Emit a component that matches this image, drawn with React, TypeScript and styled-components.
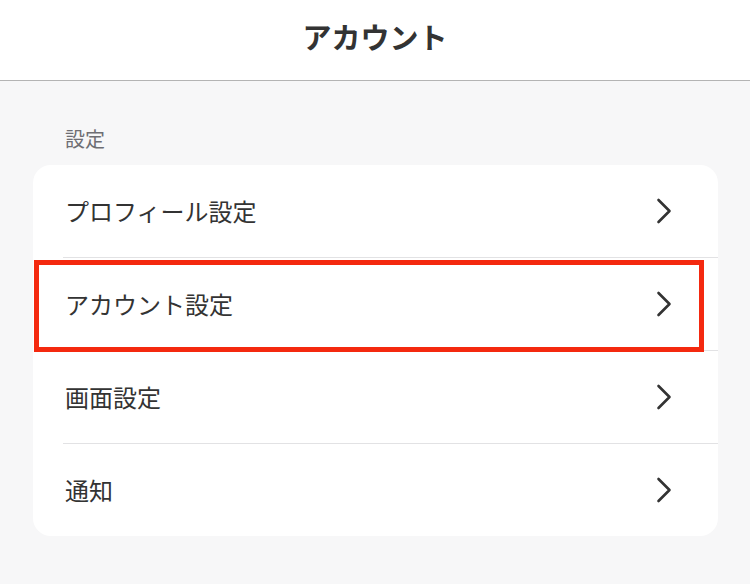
import React from 'react'
import styled, { createGlobalStyle } from 'styled-components'

type RowType = {
    label: string,
    highlighted?: boolean
}

const GlobalStyle = createGlobalStyle`
    html, body {
        margin: 0;
        padding: 0;
        background: #F7F7F8;
        font-family: "Noto Sans CJK JP", "Noto Sans", sans-serif;
        color: #333333;
    }
`

const Page = styled.div`
    width: 750px;
    min-height: 584px;
    background: #F7F7F8;
`

const Header = styled.header`
    height: 80px;
    background: #FFFFFF;
    border-bottom: 1px solid #B4B4B4;
    display: flex;
    align-items: center;
    justify-content: center;
    box-sizing: content-box;
`

const Title = styled.h1`
    margin: 0 0 8px 0;
    font-size: 29px;
    font-weight: 700;
    line-height: 1;
    color: #333333;
`

const Section = styled.section`
    padding: 0 32px 0 33px;
`

const SectionLabel = styled.div`
    padding: 38px 0 0 32px;
    height: 46px;
    font-size: 20px;
    line-height: 40px;
    color: #6E6E73;
    box-sizing: border-box;
    margin-bottom: 38px;
`

const Card = styled.div`
    width: 685px;
    background: #FFFFFF;
    border-radius: 18px;
`

const Row = styled.div<{ first: boolean }>`
    position: relative;
    margin-left: 30px;
    padding: 0 46px 0 2px;
    height: 92px;
    display: flex;
    align-items: center;
    justify-content: space-between;
    border-top: ${props => props.first ? 'none' : '1px solid #E2E2E4'};
`

const RowLabel = styled.span`
    font-size: 24px;
    line-height: 1;
    color: #333333;
`

const Chevron = styled.svg`
    width: 16px;
    height: 26px;
    flex: none;
`

/* annotation frame drawn over the selected row */
const Highlight = styled.div`
    position: absolute;
    z-index: 1;
    left: -29px;
    top: 2px;
    width: 670px;
    height: 92px;
    border: 5px solid #F4290F;
    box-sizing: border-box;
    pointer-events: none;
`

const SettingRow = ({ label, highlighted, first }: RowType & { first: boolean }) => (
    <Row first={first}>
        <RowLabel>{label}</RowLabel>
        <Chevron viewBox="0 0 16 26" fill="none">
            <path d="M2.5 2 L13.5 13 L2.5 24" stroke="#333333" strokeWidth="2.6" strokeLinecap="round" strokeLinejoin="round" />
        </Chevron>
        {highlighted && <Highlight />}
    </Row>
)

const rows: RowType[] = [
    { label: 'プロフィール設定' },
    { label: 'アカウント設定', highlighted: true },
    { label: '画面設定' },
    { label: '通知' },
]

export default function App() {
    return (
        <Page>
            <GlobalStyle />
            <Header>
                <Title>アカウント</Title>
            </Header>
            <Section>
                <SectionLabel>設定</SectionLabel>
                <Card>
                    {rows.map((r, i) => (
                        <SettingRow key={r.label} label={r.label} highlighted={r.highlighted} first={i === 0} />
                    ))}
                </Card>
            </Section>
        </Page>
    )
}
